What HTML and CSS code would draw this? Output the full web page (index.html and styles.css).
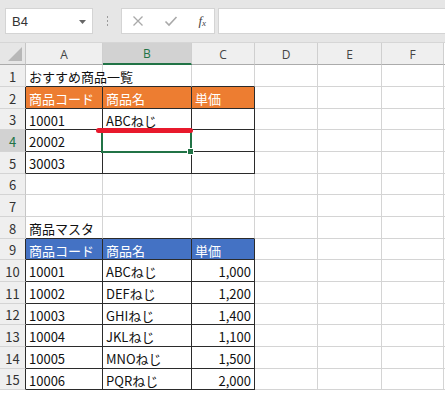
FILE: index.html
```html
<!DOCTYPE html>
<html lang="ja">
<head>
<meta charset="utf-8">
<link rel="stylesheet" href="styles.css">
</head>
<body>
<div class="app">
  <div class="toolbar">
    <div class="namebox"><span class="nb-text">B4</span><svg class="nb-arrow" width="7" height="4" viewBox="0 0 7 4"><path d="M0 0H7L3.5 4Z" fill="#666"/></svg></div>
    <div class="dots"><i></i><i></i><i></i></div>
    <div class="fbtns">
      <svg width="12" height="12" viewBox="0 0 12 12"><path d="M1.5 1.5L10.5 10.5M10.5 1.5L1.5 10.5" stroke="#a9a9a9" stroke-width="1.3"/></svg>
      <svg width="14" height="12" viewBox="0 0 14 12"><path d="M1.5 6.5L5 10L12.5 2" stroke="#a9a9a9" stroke-width="1.6" fill="none"/></svg>
      <span class="fx">f<sub>x</sub></span>
    </div>
    <div class="finput"></div>
  </div>
  <div class="sheet">
    <div class="corner"><svg width="14" height="14" viewBox="0 0 14 14"><path d="M14 0V14H0Z" fill="#b7b7b7"/></svg></div>
    <div class="ch">A</div><div class="ch sel">B</div><div class="ch">C</div><div class="ch">D</div><div class="ch">E</div><div class="ch">F</div><div class="ch end"></div>

    <div class="rh">1</div><div class="c ab">おすすめ商品一覧</div><div class="c ab"></div><div class="c ab"></div><div class="c"></div><div class="c"></div><div class="c"></div><div class="c end"></div>

    <div class="rh tb">2</div><div class="c t or">商品コード</div><div class="c t or">商品名</div><div class="c t or">単価</div><div class="c"></div><div class="c"></div><div class="c"></div><div class="c end"></div>

    <div class="rh tb">3</div><div class="c t">10001</div><div class="c t">ABCねじ</div><div class="c t"></div><div class="c"></div><div class="c"></div><div class="c"></div><div class="c end"></div>

    <div class="rh tb rsel">4</div><div class="c t">20002</div><div class="c t"></div><div class="c t"></div><div class="c"></div><div class="c"></div><div class="c"></div><div class="c end"></div>

    <div class="rh tb">5</div><div class="c t">30003</div><div class="c t"></div><div class="c t"></div><div class="c"></div><div class="c"></div><div class="c"></div><div class="c end"></div>

    <div class="rh">6</div><div class="c"></div><div class="c"></div><div class="c"></div><div class="c"></div><div class="c"></div><div class="c"></div><div class="c end"></div>

    <div class="rh">7</div><div class="c"></div><div class="c"></div><div class="c"></div><div class="c"></div><div class="c"></div><div class="c"></div><div class="c end"></div>

    <div class="rh">8</div><div class="c ab">商品マスタ</div><div class="c ab"></div><div class="c ab"></div><div class="c"></div><div class="c"></div><div class="c"></div><div class="c end"></div>

    <div class="rh tb">9</div><div class="c t bl">商品コード</div><div class="c t bl">商品名</div><div class="c t bl">単価</div><div class="c"></div><div class="c"></div><div class="c"></div><div class="c end"></div>

    <div class="rh tb">10</div><div class="c t">10001</div><div class="c t">ABCねじ</div><div class="c t num">1,000</div><div class="c"></div><div class="c"></div><div class="c"></div><div class="c end"></div>

    <div class="rh tb">11</div><div class="c t">10002</div><div class="c t">DEFねじ</div><div class="c t num">1,200</div><div class="c"></div><div class="c"></div><div class="c"></div><div class="c end"></div>

    <div class="rh tb">12</div><div class="c t">10003</div><div class="c t">GHIねじ</div><div class="c t num">1,400</div><div class="c"></div><div class="c"></div><div class="c"></div><div class="c end"></div>

    <div class="rh tb">13</div><div class="c t">10004</div><div class="c t">JKLねじ</div><div class="c t num">1,100</div><div class="c"></div><div class="c"></div><div class="c"></div><div class="c end"></div>

    <div class="rh tb">14</div><div class="c t">10005</div><div class="c t">MNOねじ</div><div class="c t num">1,500</div><div class="c"></div><div class="c"></div><div class="c"></div><div class="c end"></div>

    <div class="rh tb">15</div><div class="c t">10006</div><div class="c t">PQRねじ</div><div class="c t num">2,000</div><div class="c"></div><div class="c"></div><div class="c"></div><div class="c end"></div>

    <div class="selbox"><span class="handle"></span></div>
    <div class="redline"></div>
  </div>
</div>
</body>
</html>
```

FILE: styles.css
```css
html, body {
  margin: 0;
  padding: 0;
  background: #ffffff;
  overflow: hidden;
}
.app {
  width: 445px;
  height: 393px;
  font-family: "Noto Sans CJK JP", "Noto Sans", sans-serif;
}
.toolbar {
  height: 43px;
  border-bottom: 1px solid #d6d6d6;
  background: #e6e6e6;
  display: flex;
  align-items: flex-start;
  padding-top: 8px;
  padding-left: 5px;
  box-sizing: border-box;
}
.namebox {
  width: 88px;
  height: 26px;
  background: #fff;
  border: 1px solid #d4d4d4;
  box-sizing: border-box;
  display: flex;
  align-items: center;
  justify-content: space-between;
  padding: 0 6px 0 6px;
}
.nb-text {
  font-family: "Liberation Sans", Arial, sans-serif;
  font-size: 13px;
  color: #333;
}
.nb-arrow {
  margin-top: 1px;
}
.dots {
  width: 28px;
  height: 26px;
  display: flex;
  flex-direction: column;
  align-items: center;
  justify-content: center;
  gap: 2px;
}
.dots i {
  display: block;
  width: 1px;
  height: 2px;
  background: #9a9a9a;
}
.fbtns {
  width: 94px;
  height: 26px;
  background: #fff;
  border: 1px solid #d4d4d4;
  box-sizing: border-box;
  display: flex;
  align-items: center;
  justify-content: space-between;
  padding: 0 8px 0 10px;
}
.fx {
  font-family: "Liberation Serif", "DejaVu Serif", serif;
  font-style: italic;
  font-size: 13px;
  color: #444;
  line-height: 1;
}
.fx sub {
  font-size: 9px;
  vertical-align: -1px;
}
.finput {
  flex: 1;
  margin-left: 3px;
  height: 26px;
  background: #fff;
  border: 1px solid #d4d4d4;
  border-right: none;
  box-sizing: border-box;
}
.sheet {
  position: relative;
  display: grid;
  grid-template-columns: 26px 77px 89px 63px 63px 64px 62px 1px;
  grid-template-rows: 22px 22px 22px 21px 22px 22px 21px 22px 22px 21px 22px 22px 21px 22px 22px 21px;
}
.sheet > div {
  box-sizing: border-box;
}
.corner {
  background: #e6e6e6;
  border-right: 1px solid #c6c6c6;
  border-bottom: 1px solid #ababab;
  display: flex;
  align-items: flex-end;
  justify-content: flex-end;
  padding: 0 3px 3px 0;
}
.ch {
  background: #efefef;
  border-right: 1px solid #cfcfcf;
  border-bottom: 1px solid #ababab;
  display: flex;
  align-items: center;
  justify-content: center;
  font-family: "Open Sans", "Liberation Sans", sans-serif;
  font-size: 12px;
  color: #444;
  padding-top: 1px;
}
.ch.sel {
  background: #d2d2d2;
  color: #217346;
  border-bottom: 2px solid #217346;
}
.ch.end, .c.end {
  border-right: none;
  background: #fff;
}
.rh {
  background: #efefef;
  border-right: 1px solid #c6c6c6;
  border-bottom: 1px solid #d4d4d4;
  display: flex;
  align-items: center;
  justify-content: center;
  font-size: 13px;
  color: #333;
  padding-top: 1px;
}
.rh.tb {
  border-right-color: #2b2b2b;
}
.rh.rsel {
  background: #d2d2d2;
  color: #217346;
}
.c {
  border-right: 1px solid #d4d4d4;
  border-bottom: 1px solid #d4d4d4;
  display: flex;
  align-items: center;
  padding: 2px 0 0 3px;
  font-size: 13px;
  color: #111;
  white-space: nowrap;
  overflow: visible;
  line-height: 1;
}
.c.ab {
  border-bottom-color: #2b2b2b;
}
.c.t {
  border-right-color: #2b2b2b;
  border-bottom-color: #2b2b2b;
}
.c.or {
  background: #ed7d31;
  color: #fff;
}
.c.bl {
  background: #4472c4;
  color: #fff;
}
.c.num {
  justify-content: flex-end;
  padding: 2px 3px 0 0;
}
.selbox {
  position: absolute;
  left: 101px;
  top: 87px;
  width: 91px;
  height: 23px;
  border: 2px solid #217346;
  box-sizing: border-box;
}
.handle {
  position: absolute;
  right: -4px;
  bottom: -4px;
  width: 5px;
  height: 5px;
  background: #217346;
  border: 1px solid #fff;
}
.redline {
  position: absolute;
  left: 96px;
  top: 85px;
  width: 97px;
  height: 5px;
  border-radius: 3px;
  background: #e8192c;
}
```
